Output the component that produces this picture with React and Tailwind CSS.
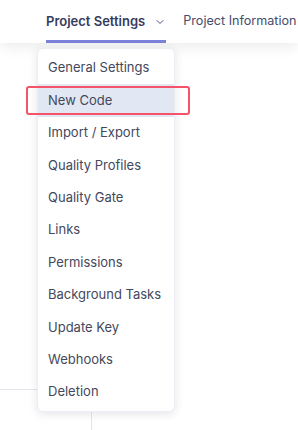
import { ChevronDown } from "lucide-react"

const items = [
  "General Settings",
  "New Code",
  "Import / Export",
  "Quality Profiles",
  "Quality Gate",
  "Links",
  "Permissions",
  "Background Tasks",
  "Update Key",
  "Webhooks",
  "Deletion",
]

export default function App() {
  return (
    <div className="relative h-[430px] w-[298px] overflow-hidden bg-white font-['Inter',sans-serif]">
      {/* top nav */}
      <header className="relative z-10 flex h-[43px] items-stretch gap-[17px] bg-white pl-[46px] shadow-[0_4px_14px_rgba(0,0,0,0.08)]">
        <div className="flex items-center gap-[9px] whitespace-nowrap border-b-[3px] border-[#7b80d8] pt-[3px] text-[13px] font-semibold text-[#363b5e]">
          Project Settings
          <ChevronDown size={12} strokeWidth={2} className="text-[#4b5075]" />
        </div>
        <div className="flex items-center whitespace-nowrap pb-[1px] text-[12.6px] text-[#464c6c]">
          Project Information
        </div>
      </header>

      {/* page content behind */}
      <main className="pt-[346px]">
        <div className="h-[60px] w-[92px] border-r border-t border-[#e3e5ec]" />
      </main>

      {/* dropdown */}
      <nav className="absolute left-[37px] top-[48px] z-20 w-[138px] rounded-[6px] border border-[#eceef3] bg-white pb-[3px] pt-[3px] shadow-[0_2px_10px_rgba(30,40,80,0.12)]">
        {items.map((label) => (
          <div
            key={label}
            className={`flex h-[32.4px] items-center px-[10px] text-[13px] text-[#44485c] ${
              label === "New Code" ? "bg-[#e1e7f3]" : ""
            }`}
          >
            {label}
          </div>
        ))}
      </nav>

      {/* highlight frame */}
      <div className="absolute left-[26px] top-[86px] z-30 h-[29px] w-[164px] rounded-[3px] border-2 border-[#f4536a]" />
    </div>
  )
}
